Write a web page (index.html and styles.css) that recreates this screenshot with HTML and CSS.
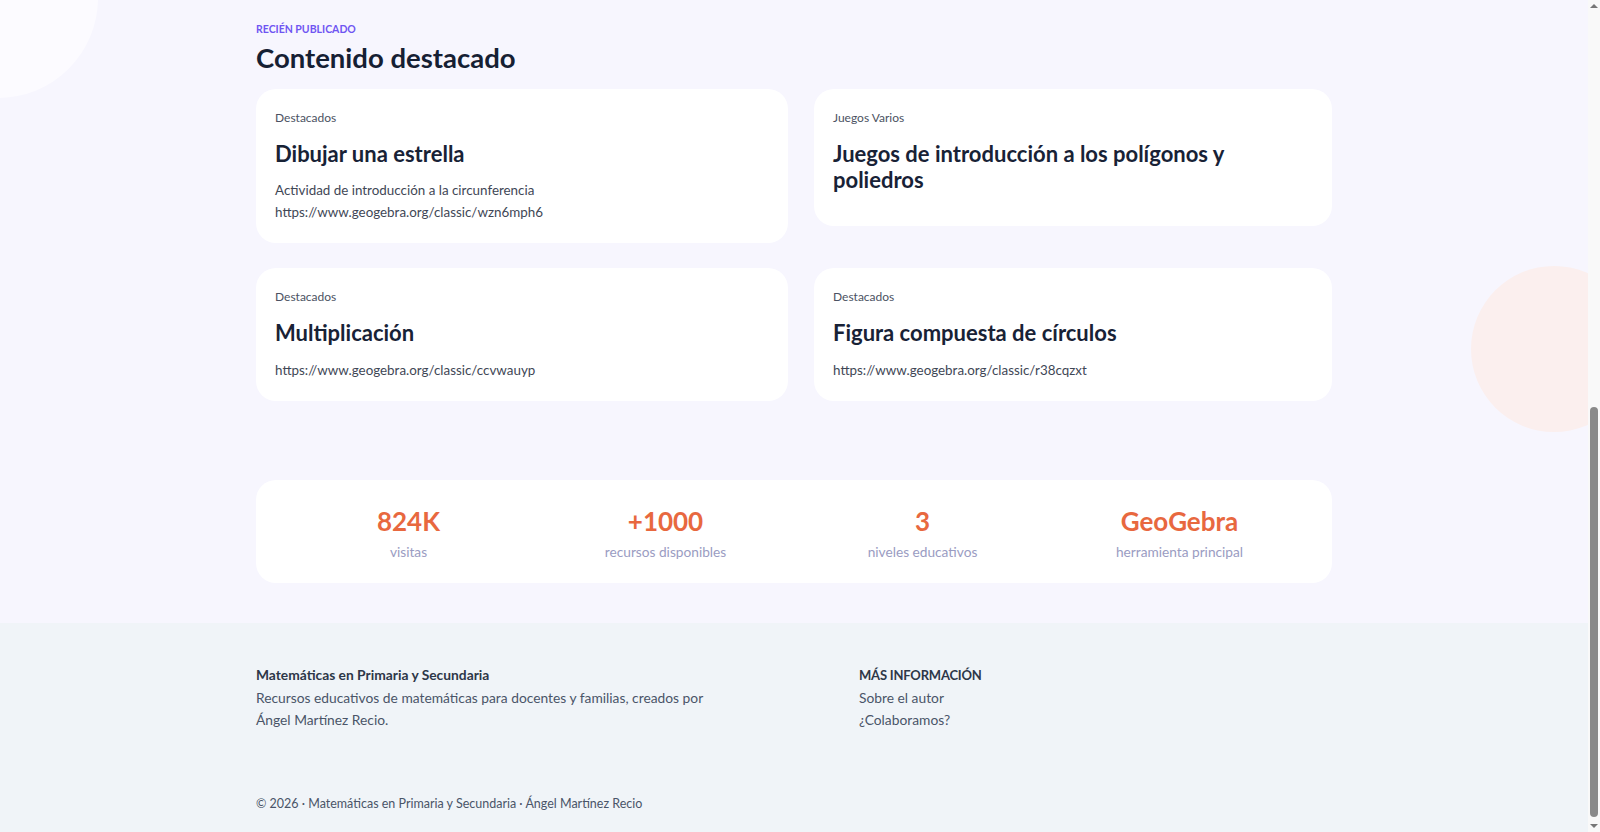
FILE: index.html
```html
<!DOCTYPE html>
<html lang="es">
<head>
    <meta charset="UTF-8">
    <meta name="viewport" content="width=device-width, initial-scale=1.0">
    <title>Matemáticas en Primaria y Secundaria</title>
    <link rel="stylesheet" href="styles.css">
</head>
<body>
    <section class="featured">
        <div class="blob blob-left"></div>
        <div class="blob blob-right"></div>

        <div class="wrap">
            <p class="eyebrow">RECIÉN PUBLICADO</p>
            <h2 class="section-title">Contenido destacado</h2>

            <div class="card-grid">
                <article class="card">
                    <p class="card-cat">Destacados</p>
                    <h3 class="card-title">Dibujar una estrella</h3>
                    <p class="card-text">Actividad de introducción a la circunferencia<br>https://www.geogebra.org/classic/wzn6mph6</p>
                </article>
                <article class="card">
                    <p class="card-cat">Juegos Varios</p>
                    <h3 class="card-title">Juegos de introducción a los polígonos y poliedros</h3>
                </article>
                <article class="card">
                    <p class="card-cat">Destacados</p>
                    <h3 class="card-title">Multiplicación</h3>
                    <p class="card-text">https://www.geogebra.org/classic/ccvwauyp</p>
                </article>
                <article class="card">
                    <p class="card-cat">Destacados</p>
                    <h3 class="card-title">Figura compuesta de círculos</h3>
                    <p class="card-text">https://www.geogebra.org/classic/r38cqzxt</p>
                </article>
            </div>

            <div class="stats">
                <div class="stat">
                    <span class="stat-num">824K</span>
                    <span class="stat-label">visitas</span>
                </div>
                <div class="stat">
                    <span class="stat-num">+1000</span>
                    <span class="stat-label">recursos disponibles</span>
                </div>
                <div class="stat">
                    <span class="stat-num">3</span>
                    <span class="stat-label">niveles educativos</span>
                </div>
                <div class="stat">
                    <span class="stat-num">GeoGebra</span>
                    <span class="stat-label">herramienta principal</span>
                </div>
            </div>
        </div>
    </section>

    <footer class="site-footer">
        <div class="wrap">
            <div class="footer-cols">
                <div>
                    <p class="footer-head">Matemáticas en Primaria y Secundaria</p>
                    <p class="footer-about">Recursos educativos de matemáticas para docentes y familias, creados por Ángel Martínez Recio.</p>
                </div>
                <div>
                    <p class="footer-head footer-caps">MÁS INFORMACIÓN</p>
                    <a class="footer-link" href="#">Sobre el autor</a>
                    <a class="footer-link" href="#">¿Colaboramos?</a>
                </div>
            </div>
            <p class="copyright">© 2026 · Matemáticas en Primaria y Secundaria · Ángel Martínez Recio</p>
        </div>
    </footer>

    <!-- page is scrolled to the bottom: draw the window scrollbar -->
    <div class="scrollbar" aria-hidden="true">
        <span class="sb-arrow sb-up"></span>
        <span class="sb-thumb"></span>
        <span class="sb-arrow sb-down"></span>
    </div>
</body>
</html>
```

FILE: styles.css
```css
body {
    margin: 0 12px 0 0;
    font-family: Lato, "Liberation Sans", sans-serif;
    color: #1b2537;
}
p, h2, h3 {
    margin: 0;
}
.wrap {
    width: 1076px;
    margin: 0 auto;
}

/* featured block */
.featured {
    position: relative;
    overflow: hidden;
    background-color: #f7f6fe;
    padding: 21px 0 40px;
}
.featured .wrap {
    position: relative;
}
.blob {
    position: absolute;
    border-radius: 50%;
}
.blob-left {
    width: 200px;
    height: 200px;
    left: -102px;
    top: -102px;
    background-color: #fcfbff;
}
.blob-right {
    width: 166px;
    height: 166px;
    left: 1471px;
    top: 266px;
    background-color: #fbefee;
}
.eyebrow {
    font-size: 10.5px;
    line-height: 16px;
    font-weight: 700;
    color: #6f55f2;
}
.section-title {
    font-size: 27.5px;
    line-height: 32px;
    font-weight: 700;
    margin-top: 5px;
    color: #162033;
}
.card-grid {
    display: grid;
    grid-template-columns: 532px 1fr;
    gap: 25px 26px;
    align-items: start;
    margin-top: 15px;
}
.card {
    background-color: #fff;
    border-radius: 20px;
    padding: 21px 19px 20px;
}
.card-cat {
    font-size: 12px;
    line-height: 16px;
    color: #4b5262;
    margin-bottom: 15px;
}
.card-title {
    font-size: 22px;
    line-height: 1.2;
    font-weight: 700;
    margin-bottom: 12px;
    color: #182236;
}
.card-text {
    font-size: 13.4px;
    line-height: 22px;
    color: #3f4756;
}

/* numbers */
.stats {
    display: grid;
    grid-template-columns: repeat(4, 1fr);
    background-color: #fff;
    border-radius: 20px;
    padding: 26px 24px 21px;
    margin-top: 79px;
}
.stat {
    display: flex;
    flex-direction: column;
    align-items: center;
}
.stat-num {
    font-size: 26px;
    line-height: 30px;
    font-weight: 700;
    color: #e8683f;
}
.stat-label {
    margin-top: 6px;
    font-size: 13.7px;
    line-height: 20px;
    color: #9a9cc2;
}

/* footer */
.site-footer {
    background-color: #f0f4f8;
    padding: 41px 0 20px;
    color: #4a5568;
    font-size: 13.8px;
    line-height: 21.5px;
}
.footer-cols {
    display: grid;
    grid-template-columns: 555px 1fr;
    gap: 48px;
}
.footer-head {
    font-weight: 700;
    color: #2d3748;
    margin-bottom: 2px;
}
.footer-caps {
    font-size: 13px;
    letter-spacing: -0.2px;
    padding-top: 1px;
    margin-bottom: 1px;
}
.footer-about {
    max-width: 460px;
}
.footer-link {
    display: block;
    color: #4a5568;
    text-decoration: none;
}
.copyright {
    margin-top: 64px;
    font-size: 12.5px;
    line-height: 20px;
}

/* scrollbar overlay */
.scrollbar {
    position: fixed;
    top: 0;
    right: 0;
    bottom: 0;
    width: 12px;
    background-color: #f9f9f9;
}
.sb-thumb {
    position: absolute;
    left: 2px;
    right: 2px;
    top: 407px;
    bottom: 15px;
    border-radius: 4px;
    background-color: #8a8a8a;
}
.sb-arrow {
    position: absolute;
    left: 2px;
    width: 0;
    height: 0;
    border-left: 4px solid transparent;
    border-right: 4px solid transparent;
}
.sb-up {
    top: 4px;
    border-bottom: 4px solid #777;
}
.sb-down {
    bottom: 4px;
    border-top: 4px solid #777;
}
```
